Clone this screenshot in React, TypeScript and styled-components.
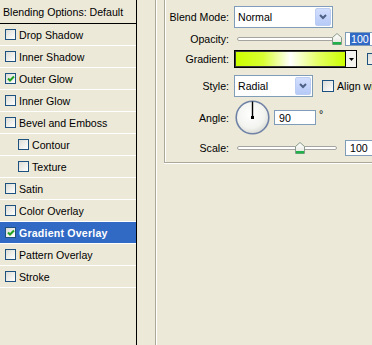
import React from "react";
import styled, { createGlobalStyle } from "styled-components";

const Global = createGlobalStyle`
  html, body { margin: 0; padding: 0; background: #ece9d8; }
  body { font-family: "Liberation Sans", Arial, sans-serif; }
`;

const Screen = styled.div`
  width: 372px;
  height: 345px;
  overflow: hidden;
  display: flex;
  align-items: flex-start;
  background: #ece9d8;
  font-family: "Liberation Sans", Arial, sans-serif;
  font-size: 10.6px;
  color: #000;
`;

const Sidebar = styled.div`
  width: 136px;
  height: 345px;
  flex: none;
  border-right: 1px solid #000;
  display: flex;
  flex-direction: column;
`;

const SideHeader = styled.div`
  height: 23px;
  border-bottom: 1px solid #000;
  display: flex;
  align-items: center;
  padding-left: 3px;
  white-space: nowrap;
`;

const SideRow = styled.div<{ $indent?: boolean; $selected?: boolean }>`
  height: 21px;
  border-bottom: 1px solid #fff;
  display: flex;
  align-items: center;
  gap: 3px;
  padding-left: ${(p) => (p.$indent ? 18 : 5)}px;
  background: ${(p) => (p.$selected ? "#316ac5" : "transparent")};
  color: ${(p) => (p.$selected ? "#fff" : "#000")};
  font-weight: ${(p) => (p.$selected ? "bold" : "normal")};
  letter-spacing: ${(p) => (p.$selected ? "0.2px" : "0")};
  white-space: nowrap;
`;

const Box = styled.span<{ $size: number }>`
  width: ${(p) => p.$size}px;
  height: ${(p) => p.$size}px;
  box-sizing: border-box;
  flex: none;
  border: 1px solid #1c5180;
  background: linear-gradient(135deg, #dcdcd7 0%, #f4f4f2 70%, #ffffff 100%);
  display: flex;
  align-items: center;
  justify-content: center;
`;

const Separator = styled.div`
  width: 1px;
  height: 345px;
  flex: none;
  margin-left: 18px;
  background: #aca899;
  box-shadow: 1px 0 0 #fff;
`;

const GroupBox = styled.div`
  margin-left: 8px;
  width: 240px;
  flex: none;
  box-sizing: border-box;
  border-left: 1px solid #aca899;
  border-bottom: 1px solid #aca899;
  box-shadow: inset 1px 0 0 #fff, 0 1px 0 #fff;
  padding-top: 6px;
  padding-bottom: 6px;
  display: flex;
  flex-direction: column;
`;

const FieldRow = styled.div<{ $top: number; $h: number }>`
  margin-top: ${(p) => p.$top}px;
  height: ${(p) => p.$h}px;
  display: flex;
  align-items: center;
  white-space: nowrap;
`;

const Label = styled.span`
  width: 64px;
  flex: none;
  text-align: right;
  margin-right: 5px;
`;

const Combo = styled.div<{ $w: number }>`
  width: ${(p) => p.$w}px;
  height: 22px;
  box-sizing: border-box;
  flex: none;
  border: 1px solid #7f9db9;
  background: #fff;
  display: flex;
  align-items: center;
`;

const ComboText = styled.span`
  flex: 1;
  padding-left: 3px;
`;

const ComboButton = styled.span`
  width: 16px;
  height: 18px;
  box-sizing: border-box;
  margin-right: 1px;
  border: 1px solid #bccdf4;
  border-radius: 2px;
  background: linear-gradient(#d2defd, #b6caf7);
  display: flex;
  align-items: center;
  justify-content: center;
`;

const SliderBox = styled.div`
  position: relative;
  width: 105px;
  height: 14px;
  margin-left: 3px;
  flex: none;
`;

const Track = styled.div`
  position: absolute;
  left: 0;
  top: 5px;
  width: 100px;
  height: 4px;
  box-sizing: border-box;
  border: 1px solid #a4a4a0;
  border-radius: 2px;
  background: #fff;
`;

const Thumb = styled.svg`
  position: absolute;
  top: 1px;
  width: 10px;
  height: 12px;
`;

const Field = styled.div<{ $w: number; $h: number }>`
  width: ${(p) => p.$w}px;
  height: ${(p) => p.$h}px;
  box-sizing: border-box;
  flex: none;
  border: 1px solid #7f9db9;
  background: #fff;
  display: flex;
  align-items: center;
  padding-left: 4px;
`;

const Selected = styled.span`
  background: #316ac5;
  color: #fff;
  padding: 0 1px;
`;

const NumberCell = styled.div`
  margin-left: 3px;
`;

const GradientField = styled.div`
  width: 123px;
  height: 18px;
  box-sizing: border-box;
  flex: none;
  border: 1px solid #000;
  display: flex;
  background: #f4f3ee;
`;

const Swatch = styled.div`
  flex: 1;
  border: 1px solid #3b3b3b;
  border-right: 1px solid #000;
  background: linear-gradient(90deg, #ccff00 0%, #d9ff33 25%, #ffffff 50%, #e5ff66 75%, #ccff00 100%);
`;

const GradArrow = styled.div`
  width: 10px;
  display: flex;
  align-items: center;
  justify-content: center;
`;

const SideCheck = styled.div<{ $gap: number }>`
  display: flex;
  align-items: center;
  gap: 3px;
  margin-left: ${(p) => p.$gap}px;
`;

const Dial = styled.svg`
  width: 35px;
  height: 35px;
  margin-left: 1px;
  flex: none;
`;

const Degree = styled.span`
  align-self: flex-start;
  margin-top: 8px;
  margin-left: 3px;
`;

const Check = () => (
  <svg width="8" height="8" viewBox="0 0 8 8">
    <path d="M1 3.5 L3 5.5 L7 1.5" stroke="#21a121" strokeWidth="2" fill="none" />
  </svg>
);

const Chevron = () => (
  <svg width="8" height="6" viewBox="0 0 8 6">
    <path d="M1 1 L4 4 L7 1" stroke="#4d6185" strokeWidth="2" fill="none" />
  </svg>
);

const ThumbShape = ({ left }: { left: number }) => (
  <Thumb viewBox="0 0 10 12" style={{ left: `${left}px` }}>
    <defs>
      <linearGradient id="tg" x1="0" y1="0" x2="0" y2="1">
        <stop offset="0" stopColor="#ffffff" />
        <stop offset="1" stopColor="#e4e4dc" />
      </linearGradient>
    </defs>
    <path d="M0.5 11.5 L0.5 4.5 L5 0.5 L9.5 4.5 L9.5 11.5 Z" fill="url(#tg)" stroke="#8a9a8a" />
    <rect x="1" y="9" width="8" height="2.5" fill="#21b14b" />
  </Thumb>
);

const Slider = ({ pct }: { pct: number }) => (
  <SliderBox>
    <Track />
    <ThumbShape left={pct * 100 - 5} />
  </SliderBox>
);

const rows: { label: string; checked?: boolean; indent?: boolean; selected?: boolean }[] = [
  { label: "Drop Shadow" },
  { label: "Inner Shadow" },
  { label: "Outer Glow", checked: true },
  { label: "Inner Glow" },
  { label: "Bevel and Emboss" },
  { label: "Contour", indent: true },
  { label: "Texture", indent: true },
  { label: "Satin" },
  { label: "Color Overlay" },
  { label: "Gradient Overlay", checked: true, selected: true },
  { label: "Pattern Overlay" },
  { label: "Stroke" },
];

export default function App() {
  return (
    <Screen>
      <Global />
      <Sidebar>
        <SideHeader>Blending Options: Default</SideHeader>
        {rows.map((r) => (
          <SideRow key={r.label} $indent={r.indent} $selected={r.selected}>
            <Box $size={11}>{r.checked && <Check />}</Box>
            <span>{r.label}</span>
          </SideRow>
        ))}
      </Sidebar>
      <Separator />
      <GroupBox>
        <FieldRow $top={0} $h={22}>
          <Label>Blend Mode:</Label>
          <Combo $w={99}>
            <ComboText>Normal</ComboText>
            <ComboButton>
              <Chevron />
            </ComboButton>
          </Combo>
        </FieldRow>
        <FieldRow $top={4} $h={14}>
          <Label>Opacity:</Label>
          <Slider pct={1} />
          <NumberCell>
            <Field $w={36} $h={14}>
              <Selected>100</Selected>
            </Field>
          </NumberCell>
        </FieldRow>
        <FieldRow $top={4} $h={18}>
          <Label>Gradient:</Label>
          <GradientField>
            <Swatch />
            <GradArrow>
              <svg width="5" height="3" viewBox="0 0 5 3">
                <path d="M0 0 L5 0 L2.5 3 Z" fill="#000" />
              </svg>
            </GradArrow>
          </GradientField>
          <SideCheck $gap={10}>
            <Box $size={12} />
          </SideCheck>
        </FieldRow>
        <FieldRow $top={6} $h={23}>
          <Label>Style:</Label>
          <Combo $w={79}>
            <ComboText>Radial</ComboText>
            <ComboButton>
              <Chevron />
            </ComboButton>
          </Combo>
          <SideCheck $gap={9}>
            <Box $size={12} />
            <span>Align with Layer</span>
          </SideCheck>
        </FieldRow>
        <FieldRow $top={3} $h={35}>
          <Label>Angle:</Label>
          <Dial viewBox="0 0 35 35">
            <defs>
              <radialGradient id="dg" cx="0.45" cy="0.4" r="0.6">
                <stop offset="0" stopColor="#ffffff" />
                <stop offset="0.7" stopColor="#f3f3f0" />
                <stop offset="1" stopColor="#dcdcd6" />
              </radialGradient>
            </defs>
            <circle cx="17.5" cy="17.5" r="16.3" fill="url(#dg)" stroke="#6f82a6" strokeWidth="1.6" />
            <line x1="17.5" y1="17.5" x2="17.5" y2="1.5" stroke="#000" strokeWidth="1.4" />
            <rect x="16" y="16" width="3" height="3" fill="#000" />
          </Dial>
          <Field $w={42} $h={15} style={{ marginLeft: 4 }}>
            90
          </Field>
          <Degree>°</Degree>
        </FieldRow>
        <FieldRow $top={5} $h={16}>
          <Label>Scale:</Label>
          <Slider pct={0.63} />
          <NumberCell>
            <Field $w={36} $h={16}>
              100
            </Field>
          </NumberCell>
        </FieldRow>
      </GroupBox>
    </Screen>
  );
}
